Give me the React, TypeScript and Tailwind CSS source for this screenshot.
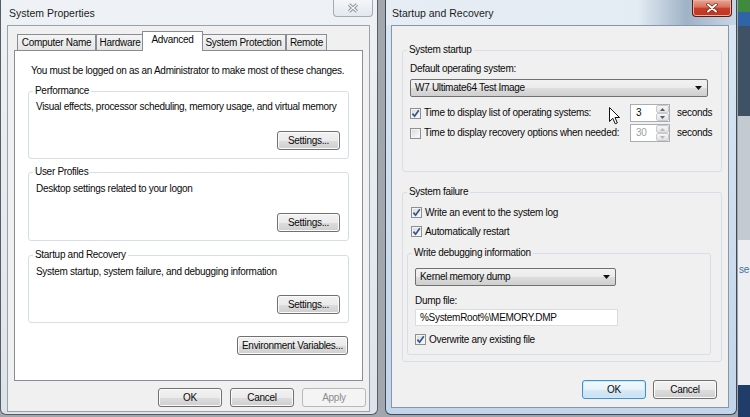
import type { ReactNode } from 'react';

type BtnState = 'normal' | 'focus' | 'disabled';

function Button({ children, className = '', state = 'normal' }: { children: ReactNode; className?: string; state?: BtnState }) {
  const look =
    state === 'focus'
      ? 'border-[#3c8fd0] bg-[linear-gradient(#f3f9fd,#e6f2fa_50%,#d6e9f6_51%,#c9e1f2)] shadow-[inset_0_0_0_1px_#cfe9f8]'
      : state === 'disabled'
        ? 'border-[#b5b9bc] bg-[#f4f4f4] text-[#8d8d8d]'
        : 'border-[#707070] bg-[linear-gradient(#f2f2f2,#ebebeb_50%,#dddddd_51%,#cfcfcf)] shadow-[inset_0_0_0_1px_#fbfbfb]';
  return (
    <button className={`h-[19px] shrink-0 rounded-[3px] border leading-none ${look} ${className}`}>
      {children}
    </button>
  );
}

function Check({ checked = false }: { checked?: boolean }) {
  return (
    <span className="w-[11px] h-[11px] shrink-0 border border-[#8e8f8f] bg-[linear-gradient(135deg,#d8d8d8,#fdfdfd)] shadow-[inset_0_0_0_1px_#f4f4f4] flex items-center justify-center">
      {checked && (
        <svg width="9" height="9" viewBox="0 0 9 9">
          <path d="M1.4 4.6 L3.6 7.2 L7.8 1.2" fill="none" stroke="#34558f" strokeWidth="1.7" />
        </svg>
      )}
    </span>
  );
}

function CheckRow({ checked, label, className = '' }: { checked?: boolean; label: string; className?: string }) {
  return (
    <div className={`h-[15px] flex items-center gap-[3px] ${className}`}>
      <Check checked={checked} />
      <span className="leading-[12px]">{label}</span>
    </div>
  );
}

function Select({ value, className = '' }: { value: string; className?: string }) {
  return (
    <div className={`h-[18px] rounded-[2px] border border-[#707070] bg-[linear-gradient(#f2f2f2,#ebebeb_50%,#dddddd_51%,#cfcfcf)] flex items-center pl-[4px] pr-[5px] ${className}`}>
      <span className="flex-1 leading-[12px]">{value}</span>
      <svg width="7" height="4" viewBox="0 0 7 4">
        <path d="M0 0 H7 L3.5 4 Z" fill="#111" />
      </svg>
    </div>
  );
}

function Spin({ value, disabled = false }: { value: string; disabled?: boolean }) {
  const arrow = disabled ? '#b8b8b8' : '#5a5a5a';
  return (
    <div className="w-[40px] h-[18px] border border-[#abadb3] bg-white flex">
      <span className={`flex-1 pl-[5px] leading-[16px] ${disabled ? 'text-[#a0a0a0]' : ''}`}>{value}</span>
      <div className="w-[13px] flex flex-col">
        <div className="flex-1 border border-[#c9cbcf] rounded-[2px] bg-[linear-gradient(#f6f6f6,#e2e2e2)] flex items-center justify-center">
          <svg width="5" height="3" viewBox="0 0 5 3"><path d="M0 3 H5 L2.5 0 Z" fill={arrow} /></svg>
        </div>
        <div className="flex-1 border border-[#c9cbcf] rounded-[2px] bg-[linear-gradient(#f6f6f6,#e2e2e2)] flex items-center justify-center">
          <svg width="5" height="3" viewBox="0 0 5 3"><path d="M0 0 H5 L2.5 3 Z" fill={arrow} /></svg>
        </div>
      </div>
    </div>
  );
}

function Group({ title, className = '', children }: { title: string; className?: string; children: ReactNode }) {
  return (
    <fieldset className={`border border-[#d5dfe5] rounded-[3px] ${className}`}>
      <legend className="ml-[4px] px-[2px] leading-[12px]">{title}</legend>
      {children}
    </fieldset>
  );
}

function CloseButton({ active }: { active: boolean }) {
  return active ? (
    <div className="w-[40px] h-[17px] rounded-b-[4px] border border-t-0 border-[#5b1a12] bg-[linear-gradient(#e8a595,#d7705c_45%,#c7402a_50%,#c4321c)] shadow-[inset_0_0_0_1px_#eab0a2] flex items-center justify-center">
      <svg width="12" height="10" viewBox="0 0 12 10">
        <path d="M2 1.5 L10 8.5 M10 1.5 L2 8.5" stroke="#6d2418" strokeWidth="3.4" strokeLinecap="round" />
        <path d="M2 1.5 L10 8.5 M10 1.5 L2 8.5" stroke="#ffffff" strokeWidth="2" strokeLinecap="round" />
      </svg>
    </div>
  ) : (
    <div className="w-[40px] h-[17px] rounded-b-[4px] border border-t-0 border-[#a5abb2] bg-[linear-gradient(#f4f6f9,#e3e8ee)] flex items-center justify-center">
      <svg width="12" height="10" viewBox="0 0 12 10">
        <path d="M2 1.5 L10 8.5 M10 1.5 L2 8.5" stroke="#8a9098" strokeWidth="3.2" />
        <path d="M2 1.5 L10 8.5 M10 1.5 L2 8.5" stroke="#f1f3f6" strokeWidth="1.4" />
      </svg>
    </div>
  );
}

function Tab({ label, width, selected = false }: { label: string; width: string; selected?: boolean }) {
  return selected ? (
    <div className={`${width} h-[20px] -mb-px -mx-[2px] relative z-10 border border-b-0 border-[#898c95] bg-white flex justify-center pt-[2px] leading-[12px]`}>
      {label}
    </div>
  ) : (
    <div className={`${width} h-[16px] border border-b-0 border-[#898c95] bg-[linear-gradient(#f5f5f5,#e5e5e5)] flex justify-center pt-[2px] leading-[12px]`}>
      {label}
    </div>
  );
}

function SystemProperties() {
  return (
    <div className="w-[378px] h-[415px] shrink-0 flex flex-col rounded-b-[6px] border border-t-0 border-[#585d64] bg-[linear-gradient(#eef2f6,#dde3ea)]">
      <div className="h-[25px] flex items-start">
        <span className="ml-[8px] mt-[7px] text-[10.5px] tracking-normal leading-[13px] text-[#1c1c1c]">System Properties</span>
        <div className="ml-auto mr-[4px]">
          <CloseButton active={false} />
        </div>
      </div>
      <div className="ml-[6px] w-[363px] h-[387px] border border-[#9ba1a8] bg-[#f0f0f0] flex flex-col">
        <div className="h-[24px] pl-[9px] flex items-end">
          <Tab label="Computer Name" width="w-[79px]" />
          <Tab label="Hardware" width="w-[48px]" />
          <Tab label="Advanced" width="w-[61px]" selected />
          <Tab label="System Protection" width="w-[85px]" />
          <Tab label="Remote" width="w-[41px]" />
        </div>
        <div className="ml-[6px] w-[349px] h-[331px] border border-[#898c95] bg-white flex flex-col">
          <p className="mt-[14px] pl-[16px] leading-[12px]">You must be logged on as an Administrator to make most of these changes.</p>

          <Group title="Performance" className="mt-[8px] ml-[13px] w-[321px] h-[74px]">
            <p className="pt-[4px] pl-[7px] leading-[12px]">Visual effects, processor scheduling, memory usage, and virtual memory</p>
            <div className="mt-[18px] pr-[8px] flex justify-end">
              <Button className="w-[63px]">Settings...</Button>
            </div>
          </Group>

          <Group title="User Profiles" className="mt-[7px] ml-[13px] w-[321px] h-[75px]">
            <p className="pt-[5px] pl-[7px] leading-[12px]">Desktop settings related to your logon</p>
            <div className="mt-[18px] pr-[8px] flex justify-end">
              <Button className="w-[63px]">Settings...</Button>
            </div>
          </Group>

          <Group title="Startup and Recovery" className="mt-[8px] ml-[13px] w-[321px] h-[74px]">
            <p className="pt-[5px] pl-[7px] leading-[12px]">System startup, system failure, and debugging information</p>
            <div className="mt-[17px] pr-[8px] flex justify-end">
              <Button className="w-[63px]">Settings...</Button>
            </div>
          </Group>

          <div className="mt-[13px] pr-[14px] flex justify-end">
            <Button className="w-[111px]">Environment Variables...</Button>
          </div>
        </div>
        <div className="mt-[7px] pr-[3px] flex justify-end gap-[8px]">
          <Button className="w-[64px]">OK</Button>
          <Button className="w-[64px]">Cancel</Button>
          <Button className="w-[64px]" state="disabled">Apply</Button>
        </div>
      </div>
    </div>
  );
}

function StartupAndRecovery() {
  return (
    <div className="ml-[7px] w-[352px] h-[415px] shrink-0 flex flex-col rounded-b-[6px] border border-t-0 border-[#3f4a58] bg-[linear-gradient(#dbe7f3,#c2d5ea)]">
      <div className="h-[25px] flex items-start bg-[linear-gradient(90deg,#e6edf4,#e3ebf3_72%,#9fb2c6_86%,#c8d7e7)]">
        <span className="ml-[6px] mt-[7px] text-[10.5px] tracking-normal leading-[13px] text-[#1c1c1c]">Startup and Recovery</span>
        <div className="ml-auto mr-[4px]">
          <CloseButton active />
        </div>
      </div>
      <div className="ml-[5px] w-[338px] h-[383px] border border-[#8797aa] bg-[#f0f0f0] flex flex-col">
        <Group title="System startup" className="mt-[18px] ml-[10px] w-[320px] h-[128px]">
          <div className="pl-[7px] pt-[7px] flex flex-col">
            <span className="leading-[12px]">Default operating system:</span>
            <Select value="W7 Ultimate64 Test Image" className="mt-[4px] w-[298px]" />
            <div className="mt-[7px] h-[18px] flex items-center">
              <div className="w-[220px] flex items-center gap-[3px]">
                <Check checked />
                <span className="leading-[12px]">Time to display list of operating systems:</span>
              </div>
              <Spin value="3" />
              <span className="ml-[7px] leading-[12px]">seconds</span>
            </div>
            <div className="mt-[2px] h-[18px] flex items-center">
              <div className="w-[220px] flex items-center gap-[3px]">
                <Check />
                <span className="leading-[12px]">Time to display recovery options when needed:</span>
              </div>
              <Spin value="30" disabled />
              <span className="ml-[7px] leading-[12px]">seconds</span>
            </div>
          </div>
        </Group>

        <Group title="System failure" className="mt-[14px] ml-[10px] w-[320px] h-[176px]">
          <div className="pl-[4px] pt-[7px] flex flex-col">
            <CheckRow checked label="Write an event to the system log" className="pl-[4px]" />
            <CheckRow checked label="Automatically restart" className="mt-[4px] pl-[4px]" />
            <Group title="Write debugging information" className="mt-[8px] w-[304px] h-[108px]">
              <div className="pl-[7px] pt-[9px] flex flex-col">
                <Select value="Kernel memory dump" className="w-[201px]" />
                <span className="mt-[9px] leading-[12px]">Dump file:</span>
                <div className="mt-[2px] w-[203px] h-[17px] border border-[#d9dde2] bg-white pl-[4px] leading-[15px]">
                  %SystemRoot%\MEMORY.DMP
                </div>
                <CheckRow checked label="Overwrite any existing file" className="mt-[6px]" />
              </div>
            </Group>
          </div>
        </Group>

        <div className="mt-[18px] pr-[11px] flex justify-end gap-[7px]">
          <Button className="w-[64px]" state="focus">OK</Button>
          <Button className="w-[64px]">Cancel</Button>
        </div>
      </div>
    </div>
  );
}

function Cursor() {
  return (
    <svg className="absolute left-[609px] top-[107px]" width="12" height="18" viewBox="0 0 12 18">
      <path d="M0.5 0.5 L0.5 14.5 L3.8 11.3 L6.2 16.8 L8.3 15.9 L6 10.5 L10.5 10.5 Z" fill="#fff" stroke="#111" strokeWidth="1" strokeLinejoin="round" />
    </svg>
  );
}

export default function App() {
  return (
    <div className="relative w-[750px] h-[417px] overflow-hidden flex bg-[#a2a7ad] font-['Liberation_Sans',Arial,sans-serif] text-[10px] tracking-[-0.3px] text-[#0a0a0a]">
      <SystemProperties />
      <StartupAndRecovery />
      <div className="ml-[1px] flex-1 flex flex-col">
        <div className="h-[12px] bg-[#3f8a3f]" />
        <div className="h-[14px] bg-[#2f64a8]" />
        <div className="h-[90px] bg-[#3f5165]" />
        <div className="h-[124px] bg-[#c3cad2]" />
        <div className="h-[145px] bg-[#eceef1] pt-[24px] pl-[1px] text-[#3c6ea8] leading-[12px]">se</div>
        <div className="flex-1 bg-[#1f3d68]" />
      </div>
      <Cursor />
    </div>
  );
}
